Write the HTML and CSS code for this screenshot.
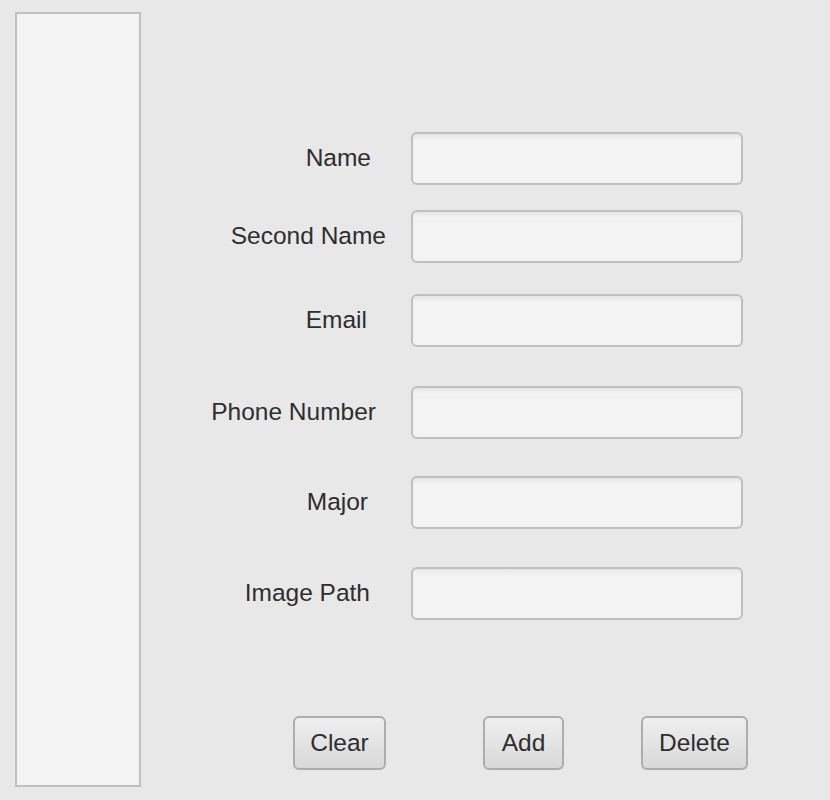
FILE: index.html
```html
<!DOCTYPE html>
<html>
<head>
<meta charset="utf-8">
<link rel="stylesheet" href="styles.css">
</head>
<body>
<div class="app">
  <div class="list"></div>
  <div class="form">
    <div class="row r1"><label class="lbl">Name</label><div class="field"></div></div>
    <div class="row r2"><label class="lbl">Second Name</label><div class="field"></div></div>
    <div class="row r3"><label class="lbl">Email</label><div class="field"></div></div>
    <div class="row r4"><label class="lbl">Phone Number</label><div class="field"></div></div>
    <div class="row r5"><label class="lbl">Major</label><div class="field"></div></div>
    <div class="row r6"><label class="lbl">Image Path</label><div class="field"></div></div>
    <div class="buttons">
      <button class="btn b-clear">Clear</button>
      <button class="btn b-add">Add</button>
      <button class="btn b-delete">Delete</button>
    </div>
  </div>
</div>
</body>
</html>
```

FILE: styles.css
```css
html, body {
  margin: 0;
  padding: 0;
  background: #e8e8e8;
  width: 830px;
  height: 800px;
  overflow: hidden;
  font-family: "Liberation Sans", Arial, sans-serif;
  color: #2e2e2e;
}
.app {
  display: flex;
  align-items: flex-start;
}
.list {
  margin: 12px 0 0 15px;
  width: 122px;
  height: 771px;
  background: #f3f3f3;
  border: 2px solid #c0c0c0;
}
.form {
  display: flex;
  flex-direction: column;
  padding-top: 132px;
}
.row {
  display: flex;
  align-items: center;
}
.lbl {
  width: 270px;
  box-sizing: border-box;
  text-align: right;
  font-size: 24.5px;
  line-height: 28px;
  margin-top: -1px;
}
.field {
  width: 328px;
  height: 49px;
  background: linear-gradient(#e6e6e6 0px, #f3f3f3 6px, #f3f3f3 100%);
  border: 2px solid #bfbfbf;
  border-radius: 6px;
}
.r1 .lbl { padding-right: 40px; }
.r2 { margin-top: 25px; }
.r2 .lbl { padding-right: 25px; }
.r3 { margin-top: 31px; }
.r3 .lbl { padding-right: 44px; }
.r4 { margin-top: 39px; }
.r4 .lbl { padding-right: 35px; }
.r5 { margin-top: 37px; }
.r5 .lbl { padding-right: 43px; }
.r6 { margin-top: 38px; }
.r6 .lbl { padding-right: 41px; }
.buttons {
  display: flex;
  margin-top: 96px;
}
.btn {
  height: 54px;
  box-sizing: border-box;
  padding: 0;
  font-family: "Liberation Sans", Arial, sans-serif;
  font-size: 24.5px;
  color: #2e2e2e;
  background: linear-gradient(#efefef, #d8d8d8);
  border: 2px solid #adadad;
  border-radius: 6px;
}
.b-clear { width: 93px; margin-left: 152px; }
.b-add { width: 81px; margin-left: 97px; }
.b-delete { width: 107px; margin-left: 77px; }
```
